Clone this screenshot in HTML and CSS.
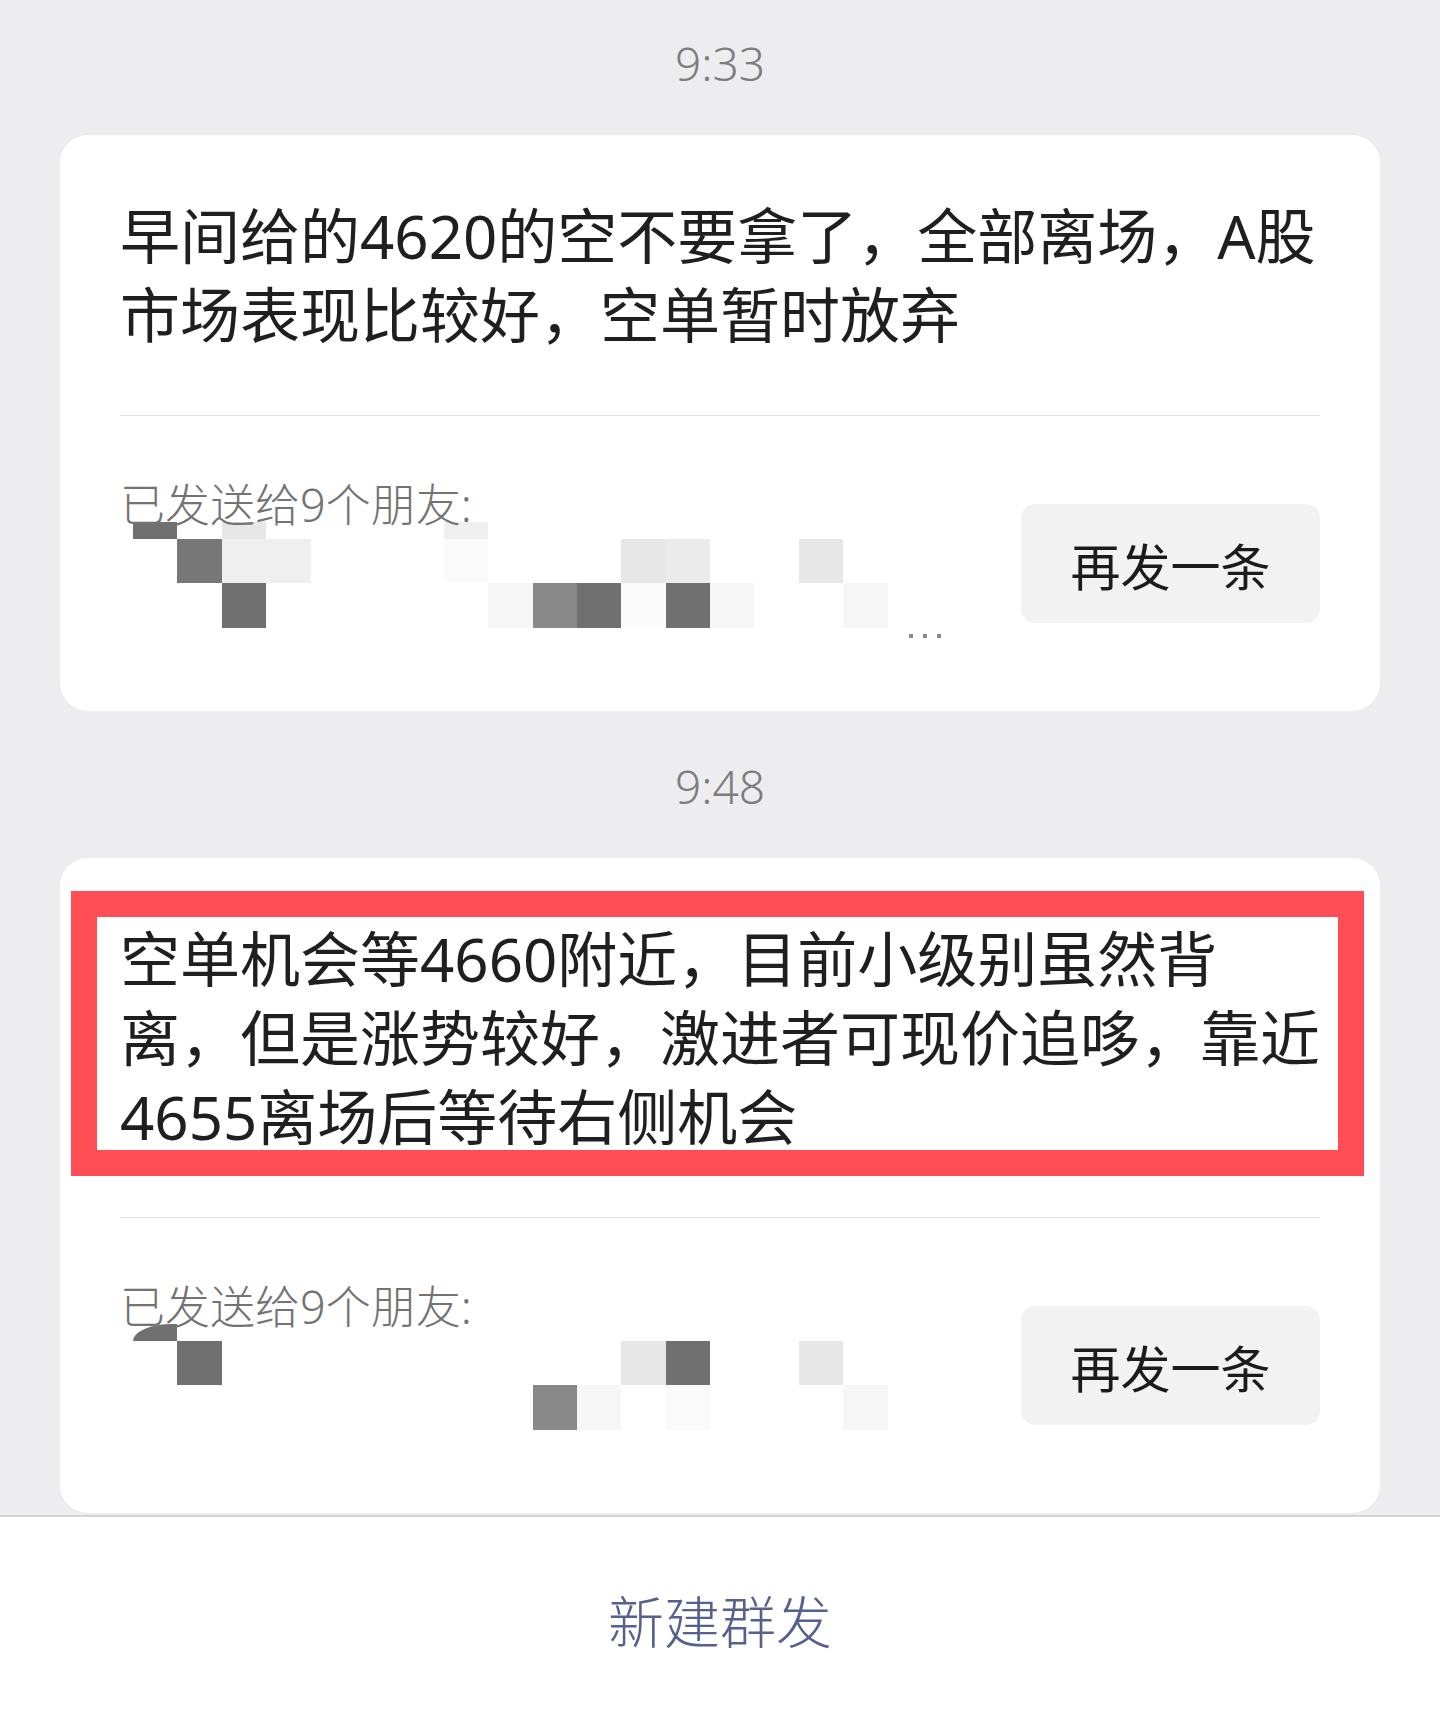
FILE: index.html
```html
<!DOCTYPE html>
<html lang="zh-CN">
<head>
<meta charset="utf-8">
<title>群发助手</title>
<link rel="stylesheet" href="styles.css">
</head>
<body>
<div class="screen">
  <main class="feed">
    <section class="batch">
      <div class="time">9:33</div>
      <div class="card">
        <p class="msg">早间给的4620的空不要拿了，全部离场，A股市场表现比较好，空单暂时放弃</p>
        <div class="meta">
          <div class="recipients">
            <div class="label">已发送给9个朋友:</div>
            <div class="mosaic">
              <i class="x0 y0 k-dark"></i>
              <i class="x2 y0 k-light"></i>
              <i class="x7 y0 k-pale"></i>
              <i class="x1 y1 k-dark2"></i>
              <i class="x2 y1 k-pale"></i>
              <i class="x3 y1 k-pale"></i>
              <i class="x7 y1 k-ghost"></i>
              <i class="x11 y1 k-light"></i>
              <i class="x12 y1 k-light2"></i>
              <i class="x15 y1 k-light"></i>
              <i class="x2 y2 k-dark"></i>
              <i class="x8 y2 k-faint"></i>
              <i class="x9 y2 k-mid"></i>
              <i class="x10 y2 k-dark"></i>
              <i class="x11 y2 k-ghost"></i>
              <i class="x12 y2 k-dark"></i>
              <i class="x13 y2 k-faint"></i>
              <i class="x16 y2 k-faint"></i>
            </div>
            <div class="more"><b></b><b></b><b></b></div>
          </div>
          <button class="resend">再发一条</button>
        </div>
      </div>
    </section>

    <section class="batch">
      <div class="time">9:48</div>
      <div class="card">
        <div class="highlight"></div>
        <p class="msg">空单机会等4660附近，目前小级别虽然背离，但是涨势较好，激进者可现价追哆，靠近4655离场后等待右侧机会</p>
        <div class="meta">
          <div class="recipients">
            <div class="label">已发送给9个朋友:</div>
            <div class="mosaic">
              <i class="x0 y0 k-dark round"></i>
              <i class="x1 y1 k-dark"></i>
              <i class="x11 y1 k-light"></i>
              <i class="x12 y1 k-dark"></i>
              <i class="x15 y1 k-light"></i>
              <i class="x9 y2 k-mid"></i>
              <i class="x10 y2 k-faint"></i>
              <i class="x12 y2 k-ghost"></i>
              <i class="x16 y2 k-faint"></i>
            </div>
          </div>
          <button class="resend">再发一条</button>
        </div>
      </div>
    </section>
  </main>

  <footer class="bottom-bar">
    <span class="new-broadcast">新建群发</span>
  </footer>
</div>
</body>
</html>
```

FILE: styles.css
```css
* {
  box-sizing: border-box;
}

html, body {
  margin: 0;
  padding: 0;
}

body {
  background: #ededef;
  font-family: "Noto Sans", "Noto Sans CJK SC", sans-serif;
  font-weight: 400;
  color: #1a1a1a;
}

.screen {
  width: 1440px;
  height: 1720px;
  display: flex;
  flex-direction: column;
}

.feed {
  flex: 1;
  overflow: hidden;
  padding: 27px 60px 0;
  display: flex;
  flex-direction: column;
  gap: 39px;
}

.batch {
  display: flex;
  flex-direction: column;
}

.time {
  height: 72px;
  line-height: 72px;
  margin-bottom: 36px;
  text-align: center;
  font-size: 46px;
  font-weight: 300;
  color: #7d7d7d;
}

.card {
  position: relative;
  background: #ffffff;
  border-radius: 28px;
  padding: 62px 60px 0;
}

.msg {
  margin: 0 -4px 60px 0;
  font-size: 60px;
  font-weight: 400;
  line-height: 79px;
  color: #1f1f1f;
  position: relative;
}

.highlight {
  position: absolute;
  left: 11px;
  top: 33px;
  width: 1293px;
  height: 285px;
  border: 26px solid #ff4d55;
  pointer-events: none;
}

.meta {
  height: 296px;
  border-top: 1px solid #e2e2e2;
  padding-top: 72px;
  display: flex;
  justify-content: space-between;
  align-items: flex-start;
}

.recipients {
  display: flex;
  flex-direction: column;
}

.label {
  position: relative;
  z-index: 1;
  font-size: 45px;
  font-weight: 300;
  line-height: 34px;
  color: #737373;
  white-space: nowrap;
}

.mosaic {
  margin-left: 13px;
  display: grid;
  grid-template-columns: repeat(18, 44.4px);
  grid-template-rows: 17px 44.4px 44.4px;
}

.mosaic i {
  display: block;
}

.x0 { grid-column: 1; }
.x1 { grid-column: 2; }
.x2 { grid-column: 3; }
.x3 { grid-column: 4; }
.x7 { grid-column: 8; }
.x8 { grid-column: 9; }
.x9 { grid-column: 10; }
.x10 { grid-column: 11; }
.x11 { grid-column: 12; }
.x12 { grid-column: 13; }
.x13 { grid-column: 14; }
.x15 { grid-column: 16; }
.x16 { grid-column: 17; }

.y0 { grid-row: 1; }
.y1 { grid-row: 2; }
.y2 { grid-row: 3; }

.k-dark { background: #707070; }
.k-dark2 { background: #777777; }
.k-mid { background: #888888; }
.k-light { background: #e7e7e7; }
.k-light2 { background: #ebebeb; }
.k-pale { background: #efefef; }
.k-faint { background: #f6f6f6; }
.k-ghost { background: #fafafa; }

.round {
  border-top-left-radius: 44px 19px;
}

.more {
  margin: 6px 0 0 789px;
  display: flex;
  gap: 10px;
  height: 4px;
}

.more b {
  display: block;
  width: 4px;
  height: 4px;
  background: #8a8a8a;
}

.resend {
  margin-top: 16px;
  width: 299px;
  height: 119px;
  border: none;
  border-radius: 14px;
  background: #f2f2f2;
  font-family: "Noto Sans CJK SC", sans-serif;
  font-size: 50px;
  font-weight: 400;
  color: #1b1b1b;
  display: flex;
  align-items: center;
  justify-content: center;
  padding: 0;
}

.bottom-bar {
  height: 205px;
  flex-shrink: 0;
  background: #ffffff;
  border-top: 2px solid #d4d4d4;
  display: flex;
  align-items: center;
  justify-content: center;
}

.new-broadcast {
  font-family: "Noto Sans CJK SC", sans-serif;
  font-size: 56px;
  font-weight: 300;
  color: #55608f;
}
```
